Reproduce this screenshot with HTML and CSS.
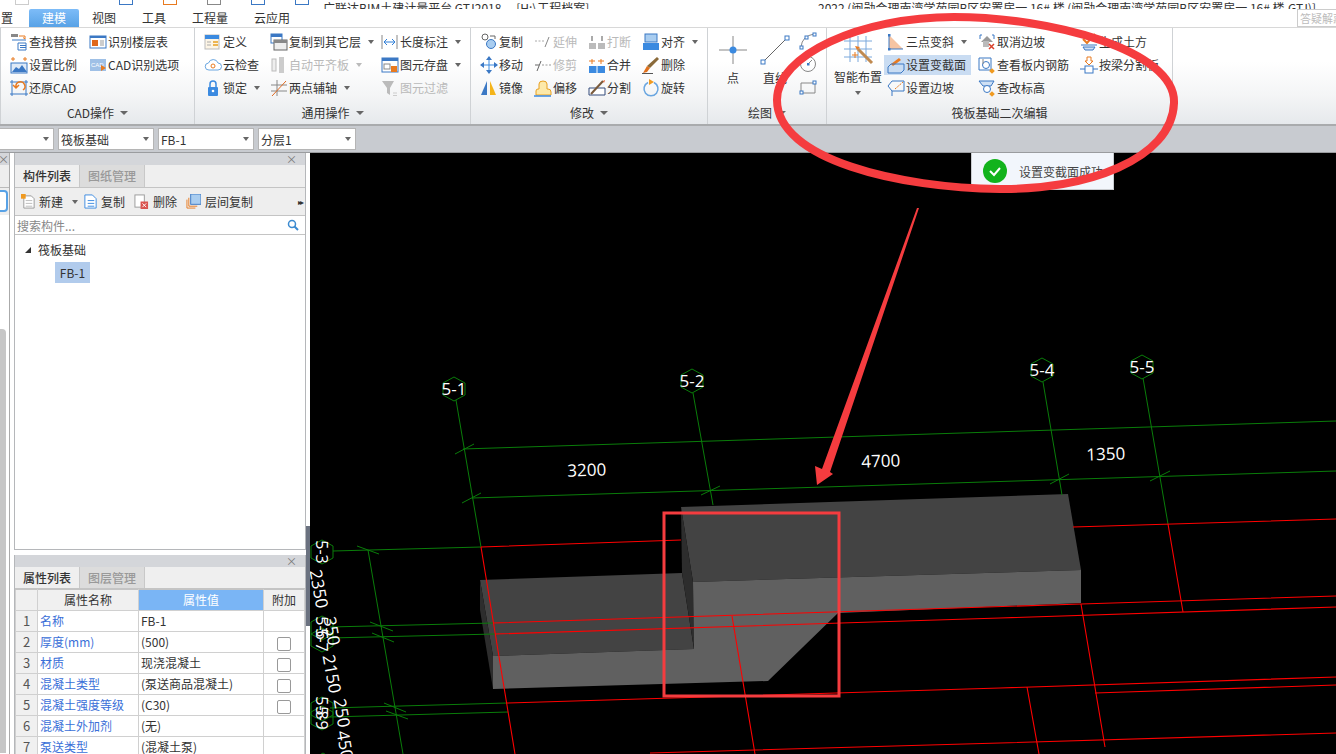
FILE: index.html
```html
<!DOCTYPE html>
<html lang="zh-CN">
<head>
<meta charset="utf-8">
<title>广联达BIM土建计量平台</title>
<link rel="stylesheet" href="styles.css">
</head>
<body>
<div class="app">
  <header class="titlebar">
    <div class="qat">
      <span class="qi q1"></span><span class="qi q2"></span><span class="qi q3"></span><span class="qi q4"></span><span class="qi q5"></span><span class="qi q6"></span>
    </div>
    <div class="title-left">广联达BIM土建计量平台 GTJ2018 &nbsp;-&nbsp; [H:\工程档案]</div>
    <div class="title-right">2022 (闽勋会理南湾学苑园B区安置房一 16# 楼 (闽勋会理南湾学苑园B区安置房一 16# 楼.GTJ)]</div>
  </header>
  <nav class="tabs">
    <span class="tab cut">置</span>
    <span class="tab active">建模</span>
    <span class="tab t-view">视图</span>
    <span class="tab t-tool">工具</span>
    <span class="tab t-qty">工程量</span>
    <span class="tab t-cloud">云应用</span>
    <span class="help">答疑解惑</span>
  </nav>
  <section class="ribbon">
    <div class="group g1">
      <div class="gbody">
        <a class="it"><svg class="ic" viewBox="0 0 18 18"><path d="M9 3h6v3M13 4.500l2 1.500" fill="none" stroke="#e87a20"/><rect x="1" y="1" width="7" height="3" fill="#888"/><path d="M2 7h14M8 10h8v7H8zM10 12.500h6M10 14.500h6" fill="none" stroke="#3b78c4"/></svg>查找替换</a>
        <a class="it"><svg class="ic" viewBox="0 0 18 18"><rect x="1" y="3" width="16" height="12" fill="#fff" stroke="#3b78c4"/><rect x="1" y="3" width="16" height="2" fill="#3b78c4"/><rect x="3" y="7" width="6" height="6" fill="#e0681c"/><path d="M11 8h4M11 10h4M11 12h4" stroke="#999"/></svg>识别楼层表</a>
        <a class="it"><svg class="ic" viewBox="0 0 18 18"><path d="M3 1v4M1 3h4M15 1v4M13 3h4" stroke="#e87a20"/><rect x="1" y="7" width="16" height="10" fill="#dfeaf7" stroke="#3b78c4"/><path d="M2 16l4-5 3 2 3-4 5 7z" fill="#3b78c4"/></svg>设置比例</a>
        <a class="it"><svg class="ic" viewBox="0 0 18 18"><rect x="1" y="3" width="16" height="12" fill="#9fc0e6"/><text class="ictx" x="2" y="11">CAD</text><path d="M12 9l5 3-5 3z" fill="#e87a20"/></svg>CAD识别选项</a>
        <a class="it"><svg class="ic" viewBox="0 0 18 18"><path d="M2 1v16M16 1v16M0 3h18M0 15h18" stroke="#3b78c4" fill="none"/><path d="M13 11a4.500 4.500 0 1 0-7-3M3 6l3 3 3-3" fill="none" stroke="#e87a20" stroke-width="1.500"/></svg>还原CAD</a>
      </div>
      <div class="glabel">CAD操作<i class="caret"></i></div>
    </div>
    <div class="group g2">
      <div class="gbody">
        <a class="it"><svg class="ic" viewBox="0 0 18 18"><rect x="1" y="2" width="14" height="14" fill="#fdf5e6" stroke="#bbb"/><rect x="1" y="2" width="14" height="4" fill="#3b8ae0"/><path d="M3 9h4M3 12h4" stroke="#aaa"/><path d="M9 9h5M9 12h5" stroke="#e8a020" stroke-width="1.500"/></svg>定义</a>
        <a class="it"><svg class="ic" viewBox="0 0 18 18"><rect x="1" y="1" width="11" height="9" fill="#fff" stroke="#3b78c4"/><rect x="1" y="1" width="11" height="3" fill="#3b78c4"/><rect x="4" y="7" width="13" height="10" fill="#eee" stroke="#666"/><rect x="4" y="7" width="13" height="3" fill="#888"/></svg>复制到其它层<i class="caret"></i></a>
        <a class="it"><svg class="ic" viewBox="0 0 18 18"><path d="M1 2v14M16 2v14" stroke="#888"/><path d="M3 9h11M3 9l3-3M3 9l3 3M14 9l-3-3M14 9l-3 3" stroke="#2f7fd8" fill="none"/></svg>长度标注<i class="caret"></i></a>
        <a class="it"><svg class="ic" viewBox="0 0 18 18"><path d="M5 14a3.500 3.500 0 0 1-.5-7A5 5 0 0 1 14 7a3.500 3.500 0 0 1 0 7z" fill="#fff" stroke="#6aa6e0"/><circle cx="9" cy="10" r="2" fill="none" stroke="#e87a20"/></svg>云检查</a>
        <a class="it off"><svg class="ic" viewBox="0 0 18 18"><rect x="2" y="3" width="4" height="12" fill="#eee" stroke="#bbb"/><rect x="9" y="1" width="5" height="16" fill="#ccc"/></svg>自动平齐板<i class="caret lite"></i></a>
        <a class="it"><svg class="ic" viewBox="0 0 18 18"><rect x="1" y="2" width="16" height="14" fill="#fff" stroke="#3b78c4"/><rect x="1" y="2" width="16" height="3" fill="#3b78c4"/><rect x="3" y="8" width="6" height="5" fill="none" stroke="#888"/><rect x="10" y="10" width="6" height="6" fill="#e87a20"/></svg>图元存盘<i class="caret"></i></a>
        <a class="it"><svg class="ic" viewBox="0 0 18 18"><path d="M6 8V5a3 3 0 0 1 6 0v3" fill="none" stroke="#3b8ae0" stroke-width="1.500"/><rect x="4" y="8" width="10" height="9" rx="1" fill="#3b8ae0"/><circle cx="9" cy="12" r="1.300" fill="#fff"/></svg>锁定<i class="caret"></i></a>
        <a class="it"><svg class="ic" viewBox="0 0 18 18"><path d="M1 6h16M1 12h16M7 1v16" stroke="#888" fill="none"/><path d="M2 17L16 2" stroke="#e06a20"/></svg>两点辅轴<i class="caret"></i></a>
        <a class="it off"><svg class="ic" viewBox="0 0 18 18"><path d="M1 2h12L9 9v7l-3-2V9z" fill="#bbb"/><path d="M12 14h4M12 16.500h4" stroke="#ccc"/></svg>图元过滤</a>
      </div>
      <div class="glabel">通用操作<i class="caret"></i></div>
    </div>
    <div class="group g3">
      <div class="gbody">
        <a class="it"><svg class="ic" viewBox="0 0 18 18"><circle cx="5" cy="4" r="3" fill="#fff" stroke="#666"/><circle cx="11" cy="11" r="4.500" fill="#a9cdf0" stroke="#3b78c4"/><path d="M10 3h5v3" fill="none" stroke="#666"/></svg>复制</a>
        <a class="it off"><svg class="ic" viewBox="0 0 18 18"><path d="M1 8h9" stroke="#aaa" stroke-dasharray="2 1.500"/><path d="M11 14l4-10" stroke="#888"/></svg>延伸</a>
        <a class="it off"><svg class="ic" viewBox="0 0 18 18"><rect x="1" y="10" width="7" height="6" fill="#bbb"/><rect x="10" y="10" width="7" height="6" fill="#bbb"/><path d="M4 3v5M14 3v5" stroke="#aaa" stroke-width="2"/></svg>打断</a>
        <a class="it"><svg class="ic" viewBox="0 0 18 18"><rect x="3" y="1" width="12" height="8" fill="#a9cdf0" stroke="#3b78c4"/><rect x="1" y="10" width="16" height="7" fill="#3b8ae0"/></svg>对齐<i class="caret"></i></a>
        <a class="it"><svg class="ic" viewBox="0 0 18 18"><path d="M9 1v16M1 9h16" stroke="#3b8ae0"/><path d="M9 0l3 4H6zM9 18l3-4H6zM0 9l4-3v6zM18 9l-4-3v6z" fill="#3b78c4"/></svg>移动</a>
        <a class="it off"><svg class="ic" viewBox="0 0 18 18"><path d="M3 15l4-10" stroke="#666"/><path d="M8 9h9" stroke="#999" stroke-dasharray="2 1.500"/><path d="M1 9h4" stroke="#666"/></svg>修剪</a>
        <a class="it"><svg class="ic" viewBox="0 0 18 18"><path d="M4 3v5M1 5h6M13 3v5M10 5h6" stroke="#e87a20"/><rect x="1" y="10" width="16" height="7" fill="#3b8ae0"/><path d="M9 10v7" stroke="#fff"/></svg>合并</a>
        <a class="it"><svg class="ic" viewBox="0 0 18 18"><path d="M15 1l2 2-9 9-3-2z" fill="#8a6a3a"/><path d="M5 10l3 2-3 4-4 1z" fill="#e0701c"/><path d="M0 17.500h11" stroke="#555"/></svg>删除</a>
        <a class="it"><svg class="ic" viewBox="0 0 18 18"><path d="M7 2L1 16h6z" fill="#3b78c4"/><path d="M10 2l6 14h-6z" fill="#f4b41a"/></svg>镜像</a>
        <a class="it"><svg class="ic" viewBox="0 0 18 18"><path d="M2 16v-4q0-2 2-2h1V5q0-3 4-3t4 3v5h1q3 0 3 3v3z" fill="#fde9a9" stroke="#e8a020"/><path d="M0 17h17" stroke="#3b8ae0" stroke-width="1.500"/></svg>偏移</a>
        <a class="it"><svg class="ic" viewBox="0 0 18 18"><path d="M1 9h16v7H1z" fill="#fff" stroke="#334a7a"/><path d="M3 15L15 2" stroke="#7a5a3a" stroke-width="2"/><path d="M15 2l2-1-1 3z" fill="#e0501c"/></svg>分割</a>
        <a class="it"><svg class="ic" viewBox="0 0 18 18"><path d="M6 3.500a7 7 0 1 0 6 0" fill="none" stroke="#6aa6e0" stroke-width="1.500"/><path d="M7 0l5 3-5 3z" fill="#f09a20"/></svg>旋转</a>
      </div>
      <div class="glabel">修改<i class="caret"></i></div>
    </div>
    <div class="group g4">
      <div class="gbody">
        <a class="big"><svg class="ic30" viewBox="0 0 30 30"><path d="M15 1v28M1 15h28" stroke="#888"/><circle cx="15" cy="15" r="3.500" fill="#3b8ae0"/></svg><span>点</span></a>
        <a class="big"><svg class="ic30" viewBox="0 0 30 30"><path d="M3 27L27 3" stroke="#666"/><rect x="1" y="25" width="4" height="4" fill="#fff" stroke="#3b78c4"/><rect x="25" y="1" width="4" height="4" fill="#fff" stroke="#3b78c4"/></svg><span>直线</span></a>
        <div class="mini">
          <svg class="ic" viewBox="0 0 18 18"><path d="M2 15Q3 4 15 2" fill="none" stroke="#888"/><rect x="1" y="14" width="3" height="3" fill="#fff" stroke="#3b78c4"/><rect x="6" y="4" width="3" height="3" fill="#fff" stroke="#3b78c4"/><rect x="14" y="1" width="3" height="3" fill="#fff" stroke="#3b78c4"/></svg>
          <svg class="ic" viewBox="0 0 18 18"><circle cx="9" cy="9" r="7.500" fill="none" stroke="#888"/><path d="M9 9l4-4" stroke="#888"/><rect x="8" y="8" width="2.500" height="2.500" fill="#3b78c4"/></svg>
          <svg class="ic" viewBox="0 0 18 18"><path d="M2 5h14v10H2z" fill="none" stroke="#888"/><rect x="14" y="3" width="3" height="3" fill="#fff" stroke="#3b78c4"/><rect x="1" y="13" width="3" height="3" fill="#fff" stroke="#3b78c4"/></svg>
        </div>
      </div>
      <div class="glabel">绘图<i class="caret"></i></div>
    </div>
    <div class="group g5">
      <div class="gbody">
        <a class="big smart"><svg class="ic30 wide" viewBox="0 0 32 32"><path d="M8 1v26M16 1v26M24 1v26M2 6h28M2 14h28M2 22h28" stroke="#7aa8dc" fill="none"/><path d="M16 14l14 14" stroke="#c08a50" stroke-width="3"/><path d="M13 11l5 1-3 3z" fill="#e87a20"/><path d="M10 20h6M13 17v6" stroke="#e87a20"/></svg><span>智能布置</span><i class="caret drop"></i></a>
        <div class="cols">
          <a class="it"><svg class="ic" viewBox="0 0 18 18"><path d="M2 2v14h14z" fill="#f6c4a2"/><path d="M2 2v14h14" fill="none" stroke="#3b78c4"/><rect x="1" y="1" width="2.500" height="2.500" fill="#3b78c4"/><rect x="1" y="15" width="2.500" height="2.500" fill="#3b78c4"/></svg>三点变斜<i class="caret"></i></a>
          <a class="it hl"><svg class="ic" viewBox="0 0 18 18"><path d="M4 8l8-6 2 2-8 6z" fill="#e87a20"/><path d="M1 17v-6l3-3h13v6l-3 3z" fill="none" stroke="#3b78c4"/></svg>设置变截面</a>
          <a class="it"><svg class="ic" viewBox="0 0 18 18"><path d="M5 2h12v10H5L1 7z" fill="none" stroke="#3b78c4"/><path d="M8 10L16 3" stroke="#e87a20" stroke-dasharray="2 1"/><path d="M5 12v5" stroke="#3b78c4"/></svg>设置边坡</a>
          <a class="it"><svg class="ic" viewBox="0 0 18 18"><path d="M2 2h2M14 2h2M2 2v4M16 2v4" stroke="#3b78c4"/><path d="M3 9l6-6 6 6" fill="#999"/><rect x="5" y="8" width="6" height="6" fill="#bbb"/><path d="M11 11l5 5M16 11l-5 5" stroke="#d9402a" stroke-width="1.500"/></svg>取消边坡</a>
          <a class="it"><svg class="ic" viewBox="0 0 18 18"><path d="M1 2h12v12H1z" fill="#fff" stroke="#3b78c4"/><circle cx="8" cy="9" r="3.500" fill="none" stroke="#3b78c4"/><path d="M5 3v5" stroke="#888"/><rect x="12" y="13" width="4" height="4" transform="rotate(45 14 15)" fill="#f09a20"/></svg>查看板内钢筋</a>
          <a class="it"><svg class="ic" viewBox="0 0 18 18"><path d="M1 2h15l-3 5H5z" fill="#cfe0f4" stroke="#3b78c4"/><circle cx="9" cy="10" r="3.500" fill="#fff" stroke="#3b78c4"/><rect x="12" y="13" width="4" height="4" transform="rotate(45 14 15)" fill="#f09a20"/></svg>查改标高</a>
          <a class="it"><svg class="ic" viewBox="0 0 18 18"><path d="M3 6l4 4 8-9" fill="none" stroke="#e87a20" stroke-width="2"/><path d="M1 12h16M3 14h12l-2 3H5z" fill="#cfe0f4" stroke="#3b78c4"/></svg>生成土方</a>
          <a class="it"><svg class="ic" viewBox="0 0 18 18"><path d="M7 1h4v4h2l-4 4-4-4h2z" fill="#fff" stroke="#e87a20"/><rect x="5" y="10" width="8" height="7" fill="#fff" stroke="#3b78c4"/><path d="M0 13h5M13 13h5" stroke="#3b78c4"/></svg>按梁分割板</a>
        </div>
      </div>
      <div class="glabel">筏板基础二次编辑</div>
    </div>
  </section>
  <section class="filters">
    <div class="combo c0"><i class="caret"></i></div>
    <div class="combo"><span>筏板基础</span><i class="caret"></i></div>
    <div class="combo"><span>FB-1</span><i class="caret"></i></div>
    <div class="combo"><span>分层1</span><i class="caret"></i></div>
  </section>
  <main class="work">
    <aside class="side">
      <div class="strip">
        <div class="s-head">×</div>
        <div class="s-tabs"></div>
        <div class="s-icon"><span></span></div>
        <div class="s-bar"></div>
      </div>
      <div class="panels">
        <section class="panel top">
          <div class="p-head">×</div>
          <div class="p-tabs"><span class="p-tab on">构件列表</span><span class="p-tab">图纸管理</span></div>
          <div class="p-tools">
            <a class="tl t1"><svg class="ic14" viewBox="0 0 16 16"><path d="M3 2h8l3 3v10H3z" fill="#fff" stroke="#999"/><path d="M5 7h7M5 10h7M5 13h7" stroke="#bbb"/><rect x="0" y="0" width="5" height="5" fill="#f09a20"/></svg>新建<i class="caret"></i></a>
            <a class="tl t2"><svg class="ic14" viewBox="0 0 16 16"><path d="M2 1h8l4 4v10H2z" fill="#fff" stroke="#3b8ae0"/><path d="M5 7h7M5 10h7M5 13h7" stroke="#3b8ae0"/></svg>复制</a>
            <a class="tl t3"><svg class="ic14" viewBox="0 0 16 16"><rect x="1" y="1" width="10" height="13" fill="#fff" stroke="#999"/><rect x="7" y="8" width="8" height="8" fill="#d9534f"/><path d="M9 10l4 4M13 10l-4 4" stroke="#fff"/></svg>删除</a>
            <a class="tl t4"><svg class="ic14" viewBox="0 0 16 16"><path d="M1 6v9h9M3 4v9h9" fill="none" stroke="#e87a20"/><rect x="5" y="0" width="11" height="11" fill="#a9cdf0" stroke="#3b78c4"/></svg>层间复制</a>
            <span class="more">▸▸</span>
          </div>
          <div class="p-search"><span>搜索构件...</span><svg class="ic12" viewBox="0 0 12 12"><circle cx="5" cy="5" r="3.500" fill="none" stroke="#3b8ad0" stroke-width="1.500"/><path d="M7.500 7.500l3.500 3.500" stroke="#3b8ad0" stroke-width="2"/></svg></div>
          <div class="tree">
            <div class="node"><i class="tri"></i>筏板基础</div>
            <div class="leaf">FB-1</div>
          </div>
        </section>
        <section class="panel bottom">
          <div class="p-head">×</div>
          <div class="p-tabs"><span class="p-tab on">属性列表</span><span class="p-tab">图层管理</span></div>
          <table class="props">
            <colgroup><col class="cn"><col class="ck"><col class="cv"><col class="ce"></colgroup>
            <thead><tr><th></th><th>属性名称</th><th class="sel">属性值</th><th>附加</th></tr></thead>
            <tbody>
              <tr><td class="n">1</td><td class="k">名称</td><td>FB-1</td><td></td></tr>
              <tr><td class="n">2</td><td class="k">厚度(mm)</td><td>(500)</td><td class="c"><i class="box"></i></td></tr>
              <tr><td class="n">3</td><td class="k">材质</td><td>现浇混凝土</td><td class="c"><i class="box"></i></td></tr>
              <tr><td class="n">4</td><td class="k">混凝土类型</td><td>(泵送商品混凝土)</td><td class="c"><i class="box"></i></td></tr>
              <tr><td class="n">5</td><td class="k">混凝土强度等级</td><td>(C30)</td><td class="c"><i class="box"></i></td></tr>
              <tr><td class="n">6</td><td class="k">混凝土外加剂</td><td>(无)</td><td></td></tr>
              <tr><td class="n">7</td><td class="k">泵送类型</td><td>(混凝土泵)</td><td></td></tr>
            </tbody>
          </table>
        </section>
      </div>
      <div class="splitter"><span class="handle"></span></div>
    </aside>
    <div class="canvas">
      <svg class="scene" viewBox="310 153 1026 601">
        <g class="faces">
          <polygon class="f-top" points="681,507 1068,494 1081,570 693,582"/>
          <polygon class="f-top" points="480,580 682,573 694,649 493,656"/>
          <polygon class="f-side" points="681,507 693,582 694,649 682,573"/>
          <polygon class="f-side" points="480,580 493,656 493,689 480,610"/>
          <polygon class="f-front" points="693,582 1081,570 1081,603 838,613 768,681 493,689 493,656 694,649"/>
        </g>
        <g class="gl">
          <path d="M456 400L481 547M693 393L713 505M1043 382L1062 495M1143 378L1168 524"/>
          <path d="M463 449L1336 421M472 498L1336 471"/>
          <path d="M455 454L474 444M462 503L481 493M701 495L720 486M1050 484L1069 474M1150 481L1170 471"/>
          <path d="M333 551L481 547M330 627L493 623M330 638L495 634M330 708L507 703M330 717L508 712"/>
          <path d="M368 550L403 754M357 546L379 554M370 622L393 631M372 633L394 642M384 703L406 712M386 711L408 719"/>
        </g>
        <g class="rl">
          <path d="M481 547L681 540M1073 527L1336 519"/>
          <path d="M493 623L1081 604L1336 596M495 634L1000 618L1336 607"/>
          <path d="M507 703L1000 688L1336 677M1095 693L1336 685M650 753L1000 743L1336 733"/>
          <path d="M481 547L515 754M732 616L755 754M1168 524L1183 612M1081 604L1105 747M1027 687L1039 754"/>
        </g>
        <g class="hx">
          <polygon points="454,377 465,383 465,395 454,401 443,395 443,383"/>
          <polygon points="692,369 703,375 703,387 692,393 681,387 681,375"/>
          <polygon points="1042,358 1053,364 1053,376 1042,382 1031,376 1031,364"/>
          <polygon points="1142,355 1153,361 1153,373 1142,379 1131,373 1131,361"/>
          <polygon points="322,540 333,546 333,558 322,564 311,558 311,546"/>
          <polygon points="322,616 333,622 333,634 322,640 311,634 311,622"/>
          <polygon points="322,628 333,634 333,646 322,652 311,646 311,634"/>
          <polygon points="322,697 333,703 333,715 322,721 311,715 311,703"/>
          <polygon points="322,706 333,712 333,724 322,730 311,724 311,712"/>
          <polygon points="323,753 333,759 313,759"/>
        </g>
        <g class="lb">
          <text class="hxt" x="454" y="395">5-1</text>
          <text class="hxt" x="692" y="387">5-2</text>
          <text class="hxt" x="1042" y="376">5-4</text>
          <text class="hxt" x="1142" y="373">5-5</text>
          <text class="dm" transform="translate(587 476) rotate(-2)">3200</text>
          <text class="dm" transform="translate(881 467) rotate(-2)">4700</text>
          <text class="dm" transform="translate(1106 460) rotate(-2)">1350</text>
          <text class="dm" transform="translate(313 590) rotate(80)">2350</text>
          <text class="dm" transform="translate(326 675) rotate(80)">2150</text>
          <text class="dm" transform="translate(326 632) rotate(80)">350</text>
          <text class="dm small" transform="translate(316 628) rotate(90)">5-6</text>
          <text class="dm small" transform="translate(316 640) rotate(90)">5-7</text>
          <text class="dm small" transform="translate(316 552) rotate(90)">5-3</text>
          <text class="dm small" transform="translate(316 708) rotate(90)">5-8</text>
          <text class="dm small" transform="translate(316 718) rotate(90)">5-9</text>
          <text class="dm" transform="translate(336 714) rotate(80)">250</text>
          <text class="dm" transform="translate(339 746) rotate(80)">450</text>
        </g>
      </svg>
      <div class="toast"><span class="ok"><svg viewBox="0 0 24 24" class="ok-ic"><path d="M7 12l4 4 6-7" fill="none" stroke="#fff" stroke-width="2"/></svg></span><span>设置变截面成功</span></div>
    </div>
  </main>
  <svg class="notes" viewBox="0 0 1336 754">
    <path class="ring" d="M954 17C1050 17 1176 50 1174 103C1172 160 1085 190 1000 189C900 188 777 160 777 100C777 55 860 17 954 17Z"/>
    <polygon class="arrow" points="919,208 830,472 833,474 817,485 815,466 822,469 917,208"/>
    <rect class="frame" x="664" y="513" width="175" height="183"/>
  </svg>
</div>
</body>
</html>
```
FILE: styles.css
```css
* { box-sizing: border-box; }
html, body { margin: 0; height: 100%; overflow: hidden; }
body { font: 12px "Noto Sans CJK SC", "Noto Sans", sans-serif; color: #333; background: #fff; }
.app { position: relative; width: 1336px; height: 754px; display: flex; flex-direction: column; overflow: hidden; }
a { color: inherit; text-decoration: none; }
i { font-style: normal; }

.titlebar { height: 9px; display: flex; overflow: hidden; align-items: flex-end; background: #fff; flex: none; }
.qat { width: 323px; height: 9px; display: flex; gap: 30px; padding-left: 65px; flex: none; }
.qi { width: 14px; height: 5px; border: 1px solid #3b78c4; border-top: 0; }
.q1 { border-color: #ccc; margin-left: -50px; margin-right: 60px; }
.q3 { border-color: #e87a20; }
.q4 { border-color: #888; }
.title-left { width: 487px; line-height: 18px; height: 18px; flex: none; margin-bottom: -8px; white-space: nowrap; }
.title-right { line-height: 18px; height: 18px; margin-bottom: -8px; white-space: nowrap; margin-left: 8px; }

.tabs { height: 19px; display: flex; align-items: stretch; background: #fff; border-bottom: 1px solid #d8d8d8; flex: none; position: relative; }
.tab { line-height: 18px; }
.cut { margin-left: 1px; width: 28px; }
.active { width: 50px; text-align: center; background: linear-gradient(#7dbcf8, #58a2e6); color: #fff; border-radius: 2px 2px 0 0; }
.t-view { margin-left: 13px; }
.t-tool { margin-left: 26px; }
.t-qty { margin-left: 26px; }
.t-cloud { margin-left: 26px; }
.help { margin-left: auto; width: 39px; height: 18px; border: 1px solid #ccc; border-right: 0; color: #bbb; white-space: nowrap; overflow: hidden; line-height: 16px; padding-left: 2px; font-size: 11px; margin-top: 0; }

.ribbon { height: 98px; display: flex; flex: none; background: linear-gradient(#fff 35%, #f4f5f6 70%, #e6e9ec); border-bottom: 2px solid #a9abad; }
.group { height: 96px; display: flex; flex-direction: column; border-right: 1px solid #cfd2d5; flex: none; }
.gbody { height: 72px; padding-top: 2px; display: grid; grid-template-rows: repeat(3, 23px); }
.glabel { flex: 1; display: flex; align-items: center; justify-content: center; gap: 6px; padding-top: 2px; line-height: 1; }
.it { display: flex; align-items: center; gap: 1px; white-space: nowrap; height: 23px; }
.off { color: #b9b9b9; }
.ic { width: 18px; height: 18px; flex: none; display: block; }
.ictx { font: 6px "Liberation Sans", sans-serif; fill: #fff; }
.caret { display: inline-block; width: 0; height: 0; border: 3.500px solid transparent; border-top: 4px solid #666; border-bottom: 0; margin-left: 6px; flex: none; }
.glabel .caret { margin-left: 0; border-width: 4px 4px 0; }
.lite { border-top-color: #bbb; }

.g1 { width: 195px; border-left: 1px solid #cfd2d5; }
.g1 .gbody { padding-left: 9px; grid-template-columns: 79px auto; }
.g2 { width: 276px; }
.g2 .gbody { padding-left: 9px; grid-template-columns: 66px 111px auto; }
.g3 { width: 237px; }
.g3 .gbody { padding-left: 9px; grid-template-columns: repeat(4, 54px); }
.g4 { width: 119px; }
.g4 .gbody { display: flex; padding-left: 4px; }
.g5 { width: 346px; }
.g5 .gbody { display: flex; padding-left: 5px; }

.big { display: flex; flex-direction: column; align-items: center; width: 42px; padding-top: 5px; }
.ic30 { width: 30px; height: 30px; flex: none; display: block; }
.big span { margin-top: 4px; line-height: 17px; white-space: nowrap; }
.mini { display: flex; flex-direction: column; width: 24px; gap: 5px; padding-top: 2px; margin-left: 3px; }
.smart { width: 52px; }
.wide { width: 32px; height: 32px; }
.smart span { margin-top: 1px; }
.smart .drop { margin: 6px 0 0; }
.cols { display: grid; grid-template-rows: repeat(3, 23px); grid-auto-flow: column; grid-template-columns: 91px 102px auto; }
.cols .it { padding-left: 3px; justify-self: start; }
.hl { background: #c9dcf2; padding-right: 5px; height: 20px; align-self: center; }

.filters { height: 27px; background: #c8cbd0; display: flex; gap: 4px; padding-top: 2px; border-bottom: 1px solid #9a9c9f; flex: none; }
.combo { width: 96px; height: 22px; background: #fff; border: 1px solid #b5b5b5; display: flex; align-items: center; justify-content: space-between; padding: 0 4px 0 2px; }
.combo .caret { margin: 0; }
.c0 { width: 54px; justify-content: flex-end; border-left: 0; }
.combo:last-child { width: 98px; }

.work { flex: 1; display: flex; min-height: 0; }
.side { width: 310px; display: flex; flex: none; background: #fff; }
.strip { width: 10px; border-right: 1px solid #aaa; display: flex; flex-direction: column; margin-right: 4px; background: #fff; }
.s-head { height: 12px; background: #d4d6da; color: #777; line-height: 12px; font-size: 11px; text-indent: -2px; overflow: hidden; }
.s-tabs { height: 23px; background: #eee; border-bottom: 1px solid #bbb; }
.s-icon { height: 27px; background: #eee; overflow: hidden; padding-top: 2px; }
.s-icon span { display: block; width: 8px; height: 22px; background: #fff; border: 2px solid #58a2e6; border-left: 0; border-radius: 0 4px 4px 0; }
.s-bar { width: 6px; height: 424px; margin-top: 114px; background: #c6c6c6; border-radius: 0 4px 0 0; }

.panels { width: 292px; display: flex; flex-direction: column; gap: 5px; flex: none; }
.panel { display: flex; flex-direction: column; border: 1px solid #b5b7ba; border-top: 0; overflow: hidden; background: #fff; }
.top { height: 397px; }
.bottom { flex: 1; min-height: 0; border-bottom: 0; }
.bottom .p-tabs { height: 22px; }
.p-head { height: 12px; background: #d4d6da; color: #777; text-align: right; padding-right: 8px; line-height: 12px; font-size: 11px; flex: none; }
.p-tabs { height: 23px; display: flex; background: #efefef; border-bottom: 1px solid #c4c4c4; flex: none; }
.p-tab { width: 65px; text-align: center; line-height: 22px; background: #dcdcdc; color: #999; border-right: 1px solid #c8c8c8; font-weight: 500; }
.p-tab.on { background: #efefef; color: #333; }
.p-tools { height: 28px; display: flex; align-items: center; background: #eee; border-bottom: 1px solid #c4c4c4; flex: none; padding-left: 6px; }
.tl { display: flex; align-items: center; gap: 3px; white-space: nowrap; }
.ic14 { width: 15px; height: 15px; display: block; flex: none; }
.t2 { margin-left: 5px; gap: 3px; }
.t3 { margin-left: 9px; gap: 4px; }
.t4 { margin-left: 9px; gap: 4px; }
.more { margin-left: auto; margin-right: 3px; font-size: 8px; color: #333; letter-spacing: -2px; }
.p-search { height: 19px; display: flex; align-items: center; justify-content: space-between; padding: 0 6px 0 2px; color: #888; border-bottom: 1px solid #c4c4c4; flex: none; }
.ic12 { width: 12px; height: 12px; display: block; }
.tree { flex: 1; padding-top: 3px; }
.node { display: flex; align-items: center; height: 22px; padding-left: 10px; gap: 7px; }
.tri { width: 0; height: 0; border: 3px solid transparent; border-right-color: #333; border-bottom-color: #333; margin-top: 2px; }
.leaf { margin-left: 40px; margin-top: 2px; width: 35px; height: 21px; background: #b1cbec; line-height: 21px; text-align: center; }

.props { border-collapse: collapse; table-layout: fixed; width: 289px; }
.cn { width: 22px; } .ck { width: 101px; } .cv { width: 125px; } .ce { width: 41px; }
.props th, .props td { border: 1px solid #d0d0d0; height: 21px; padding: 0 2px; font-weight: 400; white-space: nowrap; overflow: hidden; line-height: 18px; }
.props th { background: #f0f0f0; text-align: center; border-top: 1px solid #c4c4c4; }
.props th.sel { background: #7ab5f5; color: #fff; }
.props .n { background: #f0f0f0; text-align: center; color: #555; font-size: 13px; }
.props .k { color: #3a6fd8; }
.props .c { text-align: center; }
.box { display: inline-block; width: 14px; height: 14px; border: 1px solid #999; border-radius: 2px; background: #fff; vertical-align: middle; }

.splitter { width: 4px; background: #fff; display: flex; align-items: flex-start; flex: none; }
.handle { display: block; width: 4px; height: 100px; margin-top: 373px; background: #6b7280; }

.canvas { flex: 1; position: relative; background: #000; overflow: hidden; min-width: 0; }
.scene { display: block; width: 1026px; height: 601px; }
.f-top { fill: #434343; }
.f-side { fill: #2d2d2d; }
.f-front { fill: #606060; }
.gl path { stroke: #0a7d0a; stroke-width: 1; fill: none; }
.rl path { stroke: #f00; stroke-width: 1.100; fill: none; }
.hx polygon { stroke: #0a7d0a; fill: none; stroke-width: 1; }
.lb text { fill: #fff; font-family: "Open Sans", sans-serif; text-anchor: middle; }
.hxt { font-size: 17px; }
.dm { font-size: 17px; }
.lb .small { font-size: 16px; }

.toast { position: absolute; left: 661px; top: 0; width: 143px; height: 37px; background: #f2f6fc; border: 1px solid #c9ccd0; border-top: 0; display: flex; align-items: center; gap: 12px; padding-left: 11px; color: #444; white-space: nowrap; }
.ok { width: 24px; height: 24px; border-radius: 50%; background: #12b31c; flex: none; }
.ok-ic { width: 24px; height: 24px; display: block; }

.notes { position: absolute; left: 0; top: 0; width: 1336px; height: 754px; pointer-events: none; }
.ring { fill: none; stroke: #f53c3f; stroke-width: 8; }
.arrow { fill: #f53c3f; }
.frame { fill: none; stroke: #f53c3f; stroke-width: 3; }
```
